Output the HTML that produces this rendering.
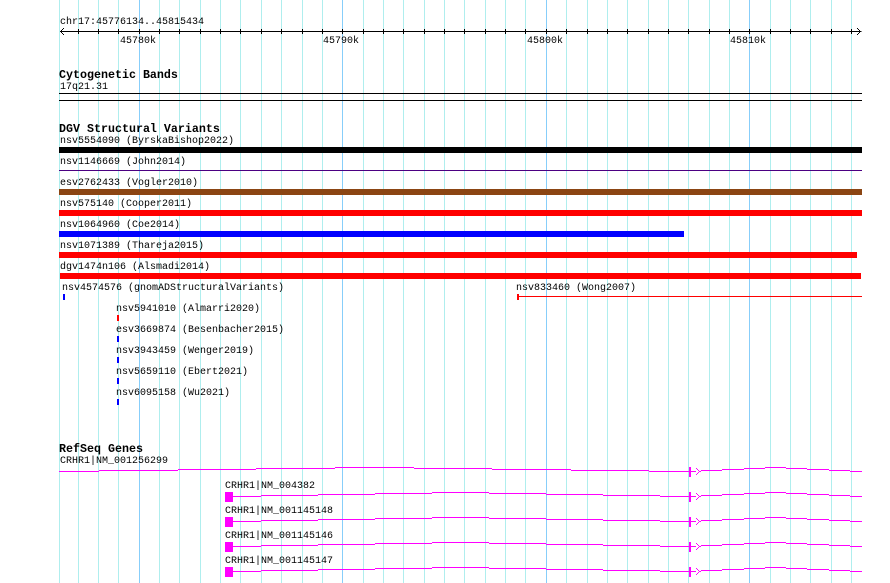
<!DOCTYPE html>
<html>
<head>
<meta charset="utf-8">
<title>chr17:45776134..45815434</title>
<style>
html,body{margin:0;padding:0;background:#fff;width:890px;height:583px;overflow:hidden}
svg{display:block;position:absolute;left:0;top:0}
text{font-family:"Liberation Mono",monospace;font-size:10px;fill:#000}
text.b{font-weight:bold;font-size:11.67px}
</style>
</head>
<body>
<svg width="890" height="583" viewBox="0 0 890 583" xmlns="http://www.w3.org/2000/svg">
<g shape-rendering="crispEdges">
<path fill="none" stroke="#afeeee" stroke-width="1" d="M59.5 0V583M78.5 0V583M98.5 0V583M118.5 0V583M159.5 0V583M179.5 0V583M200.5 0V583M220.5 0V583M240.5 0V583M261.5 0V583M281.5 0V583M302.5 0V583M322.5 0V583M363.5 0V583M383.5 0V583M403.5 0V583M424.5 0V583M444.5 0V583M464.5 0V583M485.5 0V583M505.5 0V583M525.5 0V583M566.5 0V583M587.5 0V583M607.5 0V583M627.5 0V583M648.5 0V583M668.5 0V583M688.5 0V583M709.5 0V583M729.5 0V583M770.5 0V583M790.5 0V583M810.5 0V583M831.5 0V583M851.5 0V583"/>
<path fill="none" stroke="#87cefa" stroke-width="1" d="M139.5 0V583M342.5 0V583M546.5 0V583M749.5 0V583"/>

<!-- ruler -->
<path fill="none" stroke="#000" stroke-width="1" d="M60 31.5H861.5M78.5 29V34M98.5 29V34M118.5 29V34M139.5 29V34M159.5 29V34M179.5 29V34M200.5 29V34M220.5 29V34M240.5 29V34M261.5 29V34M281.5 29V34M302.5 29V34M322.5 29V34M342.5 29V34M363.5 29V34M383.5 29V34M403.5 29V34M424.5 29V34M444.5 29V34M464.5 29V34M485.5 29V34M505.5 29V34M525.5 29V34M546.5 29V34M566.5 29V34M587.5 29V34M607.5 29V34M627.5 29V34M648.5 29V34M668.5 29V34M688.5 29V34M709.5 29V34M729.5 29V34M749.5 29V34M770.5 29V34M790.5 29V34M810.5 29V34M831.5 29V34M851.5 29V34"/>
<path fill="#000" d="M60 31h1v1h-1zM61 30h1v3h-1zM62 29h1v1h-1zM62 33h1v1h-1zM63 28h1v1h-1zM63 34h1v1h-1zM860 31h1v1h-1zM859 30h1v1h-1zM859 32h1v1h-1zM858 29h1v1h-1zM858 33h1v1h-1zM857 28h1v1h-1zM857 34h1v1h-1z"/>

<!-- cytogenetic bands -->
<rect x="59" y="93" width="803" height="1" fill="#000"/>
<rect x="59" y="100" width="803" height="1" fill="#000"/>

<!-- DGV -->
<rect x="59" y="147" width="803" height="6" fill="#000"/>
<rect x="59" y="170" width="803" height="1" fill="#4b0082"/>
<rect x="59" y="189" width="803" height="6" fill="#8b4513"/>
<rect x="59" y="210" width="803" height="6" fill="#ff0000"/>
<rect x="59" y="231" width="625" height="6" fill="#0000ff"/>
<rect x="59" y="252" width="798" height="6" fill="#ff0000"/>
<rect x="60" y="273" width="801" height="6" fill="#ff0000"/>
<rect x="517" y="296" width="345" height="1" fill="#ff0000"/>
<rect x="517" y="294" width="2" height="6" fill="#ff0000"/>
<rect x="63" y="294" width="2" height="6" fill="#0000ff"/>
<rect x="117" y="315" width="2" height="6" fill="#ff0000"/>
<rect x="117" y="336" width="2" height="6" fill="#0000ff"/>
<rect x="117" y="357" width="2" height="6" fill="#0000ff"/>
<rect x="117" y="378" width="2" height="6" fill="#0000ff"/>
<rect x="117" y="399" width="2" height="6" fill="#0000ff"/>

<!-- RefSeq first transcript -->
<g fill="#ff00ff">
<path d="M59 471h40v1H59zM99 470h79v1H99zM178 469h78v1h-78zM256 468h79v1h-79zM335 467h79v1h-79zM414 468h78v1h-78zM492 469h79v1h-79zM571 470h78v1h-78zM649 471h47v1h-47zM701 470h21v1h-21zM722 469h22v1h-22zM744 468h21v1h-21zM765 467h21v1h-21zM786 468h21v1h-21zM807 469h22v1h-22zM829 470h21v1h-21zM850 471h12v1h-12z"/>
<path d="M689 467h2v10h-2zM696 468h1v1h-1zM697 469h1v1h-1zM698 470h1v1h-1zM699 471h2v1h-2zM698 472h1v1h-1zM697 473h1v1h-1zM696 474h1v1h-1z"/>
</g>
<!-- other transcripts -->
<g fill="#ff00ff">
<path d="M225 492h8v10h-8zM233 496h28v1h-28zM261 495h57v1h-57zM318 494h57v1h-57zM375 493h57v1h-57zM432 492h57v1h-57zM489 493h57v1h-57zM546 494h57v1h-57zM603 495h57v1h-57zM660 496h36v1h-36zM701 495h21v1h-21zM722 494h22v1h-22zM744 493h21v1h-21zM765 492h21v1h-21zM786 493h21v1h-21zM807 494h22v1h-22zM829 495h21v1h-21zM850 496h12v1h-12zM689 492h2v10h-2zM696 493h1v1h-1zM697 494h1v1h-1zM698 495h1v1h-1zM699 496h2v1h-2zM698 497h1v1h-1zM697 498h1v1h-1zM696 499h1v1h-1z"/>
<path transform="translate(0,25)" d="M225 492h8v10h-8zM233 496h28v1h-28zM261 495h57v1h-57zM318 494h57v1h-57zM375 493h57v1h-57zM432 492h57v1h-57zM489 493h57v1h-57zM546 494h57v1h-57zM603 495h57v1h-57zM660 496h36v1h-36zM701 495h21v1h-21zM722 494h22v1h-22zM744 493h21v1h-21zM765 492h21v1h-21zM786 493h21v1h-21zM807 494h22v1h-22zM829 495h21v1h-21zM850 496h12v1h-12zM689 492h2v10h-2zM696 493h1v1h-1zM697 494h1v1h-1zM698 495h1v1h-1zM699 496h2v1h-2zM698 497h1v1h-1zM697 498h1v1h-1zM696 499h1v1h-1z"/>
<path transform="translate(0,50)" d="M225 492h8v10h-8zM233 496h28v1h-28zM261 495h57v1h-57zM318 494h57v1h-57zM375 493h57v1h-57zM432 492h57v1h-57zM489 493h57v1h-57zM546 494h57v1h-57zM603 495h57v1h-57zM660 496h36v1h-36zM701 495h21v1h-21zM722 494h22v1h-22zM744 493h21v1h-21zM765 492h21v1h-21zM786 493h21v1h-21zM807 494h22v1h-22zM829 495h21v1h-21zM850 496h12v1h-12zM689 492h2v10h-2zM696 493h1v1h-1zM697 494h1v1h-1zM698 495h1v1h-1zM699 496h2v1h-2zM698 497h1v1h-1zM697 498h1v1h-1zM696 499h1v1h-1z"/>
<path transform="translate(0,75)" d="M225 492h8v10h-8zM233 496h28v1h-28zM261 495h57v1h-57zM318 494h57v1h-57zM375 493h57v1h-57zM432 492h57v1h-57zM489 493h57v1h-57zM546 494h57v1h-57zM603 495h57v1h-57zM660 496h36v1h-36zM701 495h21v1h-21zM722 494h22v1h-22zM744 493h21v1h-21zM765 492h21v1h-21zM786 493h21v1h-21zM807 494h22v1h-22zM829 495h21v1h-21zM850 496h12v1h-12zM689 492h2v10h-2zM696 493h1v1h-1zM697 494h1v1h-1zM698 495h1v1h-1zM699 496h2v1h-2zM698 497h1v1h-1zM697 498h1v1h-1zM696 499h1v1h-1z"/>
</g>
</g>

<g transform="translate(0,-1)">
<text x="60" y="25">chr17:45776134..45815434</text>
<text x="120" y="44">45780k</text>
<text x="323" y="44">45790k</text>
<text x="527" y="44">45800k</text>
<text x="730" y="44">45810k</text>

<text class="b" x="59" y="79">Cytogenetic Bands</text>
<text x="60" y="90">17q21.31</text>

<text class="b" x="59" y="133">DGV Structural Variants</text>
<text x="60" y="144">nsv5554090 (ByrskaBishop2022)</text>
<text x="60" y="165">nsv1146669 (John2014)</text>
<text x="60" y="186">esv2762433 (Vogler2010)</text>
<text x="60" y="207">nsv575140 (Cooper2011)</text>
<text x="60" y="228">nsv1064960 (Coe2014)</text>
<text x="60" y="249">nsv1071389 (Thareja2015)</text>
<text x="60" y="270">dgv1474n106 (Alsmadi2014)</text>
<text x="62" y="291">nsv4574576 (gnomADStructuralVariants)</text>
<text x="516" y="291">nsv833460 (Wong2007)</text>
<text x="116" y="312">nsv5941010 (Almarri2020)</text>
<text x="116" y="333">esv3669874 (Besenbacher2015)</text>
<text x="116" y="354">nsv3943459 (Wenger2019)</text>
<text x="116" y="375">nsv5659110 (Ebert2021)</text>
<text x="116" y="396">nsv6095158 (Wu2021)</text>

<text class="b" x="59" y="453">RefSeq Genes</text>
<text x="60" y="464">CRHR1|NM_001256299</text>
<text x="225" y="489">CRHR1|NM_004382</text>
<text x="225" y="514">CRHR1|NM_001145148</text>
<text x="225" y="539">CRHR1|NM_001145146</text>
<text x="225" y="564">CRHR1|NM_001145147</text>
</g>
</svg>
</body>
</html>
